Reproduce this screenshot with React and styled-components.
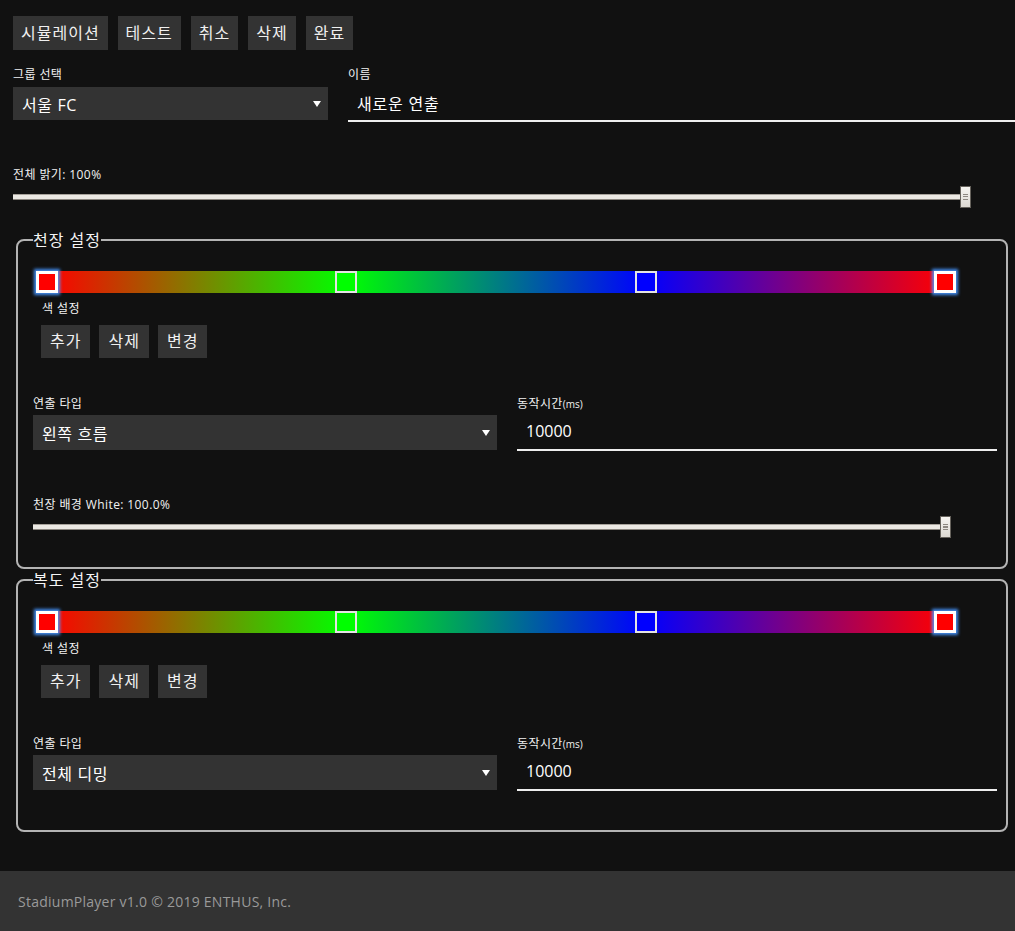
import React from "react";
import styled, { createGlobalStyle } from "styled-components";

const GlobalStyle = createGlobalStyle`
  html, body {
    margin: 0;
    padding: 0;
    background: #111111;
  }
  body {
    font-family: "Open Sans", "Noto Sans CJK KR", sans-serif;
    color: #f2f2f2;
    overflow: hidden;
  }
  * { box-sizing: border-box; }
`;

const Page = styled.div`
  min-height: 931px;
  background: #111111;
  display: flex;
  flex-direction: column;
`;

const Main = styled.div`
  padding: 16px 0 0 13px;
`;

const Toolbar = styled.div`
  display: flex;
  gap: 10px;
`;

const Button = styled.button`
  height: 34px;
  padding: 0 8px;
  border: none;
  border-radius: 0;
  background: #333333;
  color: #f0f0f0;
  font-family: "Open Sans", "Noto Sans CJK KR", sans-serif;
  font-size: 16px;
  letter-spacing: 1px;
  line-height: 34px;
  cursor: pointer;
`;

const SmallButton = styled(Button)`
  height: 33px;
  line-height: 33px;
  padding: 0 9px;
`;

const Row = styled.div`
  display: flex;
  gap: 20px;
  margin-top: ${p => p.$top || 0}px;
`;

const Field = styled.div`
  display: flex;
  flex-direction: column;
  width: ${p => (p.$width ? `${p.$width}px` : "auto")};
  flex: ${p => (p.$width ? "none" : 1)};
`;

const Label = styled.div`
  font-size: 12px;
  line-height: 16px;
  letter-spacing: 0.4px;
  color: #f2f2f2;
  margin-bottom: ${p => p.$gap ?? 4}px;
  margin-left: ${p => p.$left || 0}px;
  margin-top: ${p => p.$top || 0}px;

  small {
    font-size: 10px;
    letter-spacing: 0;
  }
`;

const Select = styled.div`
  height: ${p => p.$h || 33}px;
  background: #333333;
  display: flex;
  align-items: center;
  justify-content: space-between;
  padding: 0 7px 0 9px;
  font-size: 16px;
  letter-spacing: 0.6px;
  color: #ffffff;
`;

const Caret = styled.span`
  width: 0;
  height: 0;
  border-left: 4px solid transparent;
  border-right: 4px solid transparent;
  border-top: 6px solid #ffffff;
`;

const Input = styled.div`
  height: ${p => p.$h || 35}px;
  border-bottom: 2px solid #eeeeee;
  display: flex;
  align-items: center;
  padding: 0 9px 2px;
  font-size: 16px;
  letter-spacing: ${p => p.$spacing ?? 0.8}px;
  color: #ffffff;
`;

const SliderBox = styled.div`
  position: relative;
  width: ${p => p.$width}px;
  height: 22px;
  margin-top: 3px;
  display: flex;
  align-items: center;
`;

const Track = styled.div`
  flex: 1;
  height: 6px;
  background: #ebe8e3;
  border-top: 1px solid #a7a29b;
  border-bottom: 1px solid #8b867f;
`;

const Thumb = styled.div`
  position: absolute;
  right: 0;
  top: 0;
  width: 11px;
  height: 22px;
  background: linear-gradient(to bottom, #f6f4f1, #dcd8d2);
  border: 1px solid #66625c;
  display: flex;
  align-items: center;
  justify-content: center;
`;

const Grip = styled.span`
  width: 5px;
  height: 6px;
  background: repeating-linear-gradient(
    to bottom,
    #8d8882 0 1px,
    transparent 1px 2.5px
  );
`;

const Box = styled.fieldset`
  margin: ${p => p.$top}px 0 0 3px;
  width: 992px;
  border: 2px solid #b4b4b4;
  border-radius: 8px;
  padding: 21px 9px ${p => p.$bottom}px 15px;
  min-width: 0;
`;

const Legend = styled.legend`
  padding: 0;
  font-size: 16px;
  line-height: 20px;
  letter-spacing: 1px;
  color: #f4f4f4;
`;

const Gradient = styled.div`
  position: relative;
  margin-left: 3px;
  width: 920px;
  height: 22px;
  background: linear-gradient(
    to right,
    #ff0000 1.2%,
    #00ff00 33.7%,
    #0000ff 66.2%,
    #ff0000 98.8%
  );
`;

const Stop = styled.div`
  position: absolute;
  top: 0;
  width: 22px;
  height: 22px;
  background: ${p => p.$color};
  border: ${p => (p.$active ? "3px solid #ffffff" : "2px solid #e4e4e4")};
  box-shadow: ${p =>
    p.$active ? "0 0 3px 2px rgba(70, 150, 255, 0.95)" : "none"};
`;

const ButtonRow = styled.div`
  display: flex;
  gap: 9px;
  margin: 8px 0 0 8px;
`;

const Footer = styled.footer`
  margin-top: auto;
  height: 60px;
  background: #333333;
  display: flex;
  align-items: center;
  padding-left: 18px;
  font-size: 14px;
  letter-spacing: 0.25px;
  color: #9a9a9a;
`;

const stops = [
  { pos: 0, color: "#ff0000", active: true },
  { pos: 1 / 3, color: "#00ff00" },
  { pos: 2 / 3, color: "#0000ff" },
  { pos: 1, color: "#ff0000", active: true },
];

function Slider({ width }) {
  return (
    <SliderBox $width={width}>
      <Track />
      <Thumb>
        <Grip />
      </Thumb>
    </SliderBox>
  );
}

function ColorBar() {
  return (
    <Gradient>
      {stops.map((s, i) => (
        <Stop
          key={i}
          $color={s.color}
          $active={s.active}
          style={{ left: `${Math.round(s.pos * 898)}px` }}
        />
      ))}
    </Gradient>
  );
}

function Section({ title, type, top, bottom, background }) {
  return (
    <Box $top={top} $bottom={bottom}>
      <Legend>{title}</Legend>
      <ColorBar />
      <Label $left={9} $top={8} $gap={0}>색 설정</Label>
      <ButtonRow>
        <SmallButton>추가</SmallButton>
        <SmallButton>삭제</SmallButton>
        <SmallButton>변경</SmallButton>
      </ButtonRow>
      <Row $top={38}>
        <Field $width={464}>
          <Label $gap={3}>연출 타입</Label>
          <Select $h={35}>
            {type}
            <Caret />
          </Select>
        </Field>
        <Field>
          <Label $gap={3}>
            동작시간<small>(ms)</small>
          </Label>
          <Input $h={36} $spacing={0}>10000</Input>
        </Field>
      </Row>
      {background && (
        <>
          <Label $top={46} $gap={0}>
            천장 배경 White: 100.0%
          </Label>
          <Slider width={918} />
        </>
      )}
    </Box>
  );
}

export default function App() {
  return (
    <Page>
      <GlobalStyle />
      <Main>
        <Toolbar>
          <Button>시뮬레이션</Button>
          <Button>테스트</Button>
          <Button>취소</Button>
          <Button>삭제</Button>
          <Button>완료</Button>
        </Toolbar>

        <Row $top={17}>
          <Field $width={315}>
            <Label>그룹 선택</Label>
            <Select>
              서울 FC
              <Caret />
            </Select>
          </Field>
          <Field>
            <Label>이름</Label>
            <Input>새로운 연출</Input>
          </Field>
        </Row>

        <Label $top={45} $gap={0}>
          전체 밝기: 100%
        </Label>
        <Slider width={958} />

        <Section title="천장 설정" type="왼쪽 흐름" top={22} bottom={29} background />
        <Section title="복도 설정" type="전체 디밍" top={1} bottom={39} />
      </Main>
      <Footer>StadiumPlayer v1.0 © 2019 ENTHUS, Inc.</Footer>
    </Page>
  );
}
